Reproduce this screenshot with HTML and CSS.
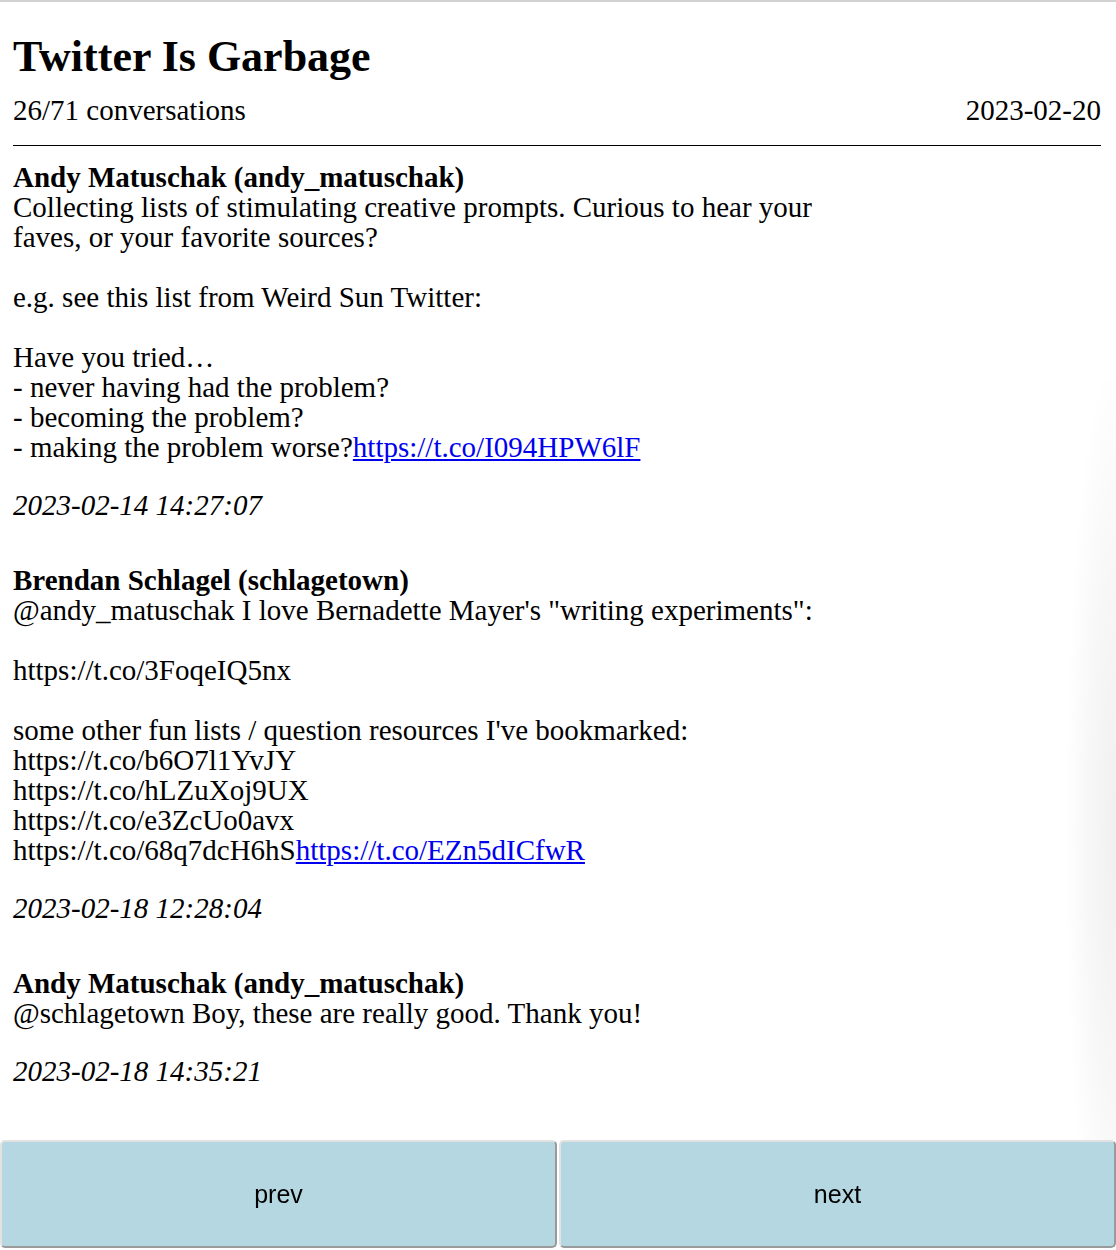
FILE: index.html
```html
<!DOCTYPE html>
<html lang="en">
<head>
<meta charset="utf-8">
<title>Twitter Is Garbage</title>
<link rel="stylesheet" href="styles.css">
</head>
<body>
<div class="page">
  <header class="masthead">
    <h1 class="title">Twitter Is Garbage</h1>
    <div class="meta">
      <span>26/71 conversations</span>
      <span>2023-02-20</span>
    </div>
  </header>
  <hr class="rule">
  <main class="thread">
    <article class="tweet">
      <div class="author">Andy Matuschak (andy_matuschak)</div>
      <div class="text">Collecting lists of stimulating creative prompts. Curious to hear your faves, or your favorite sources?

e.g. see this list from Weird Sun Twitter:

Have you tried…
- never having had the problem?
- becoming the problem?
- making the problem worse?<a href="#">https://t.co/I094HPW6lF</a></div>
      <div class="date">2023-02-14 14:27:07</div>
    </article>
    <article class="tweet">
      <div class="author">Brendan Schlagel (schlagetown)</div>
      <div class="text">@andy_matuschak I love Bernadette Mayer's "writing experiments":

https://t.co/3FoqeIQ5nx

some other fun lists / question resources I've bookmarked:
https://t.co/b6O7l1YvJY
https://t.co/hLZuXoj9UX
https://t.co/e3ZcUo0avx
https://t.co/68q7dcH6hS<a href="#">https://t.co/EZn5dICfwR</a></div>
      <div class="date">2023-02-18 12:28:04</div>
    </article>
    <article class="tweet">
      <div class="author">Andy Matuschak (andy_matuschak)</div>
      <div class="text">@schlagetown Boy, these are really good. Thank you!</div>
      <div class="date">2023-02-18 14:35:21</div>
    </article>
  </main>
</div>
<div class="edge-shadow"></div>
<nav class="pager">
  <button class="pager-btn" type="button">prev</button>
  <button class="pager-btn" type="button">next</button>
</nav>
</body>
</html>
```

FILE: styles.css
```css
html, body {
  margin: 0;
  padding: 0;
  background: #fff;
}

body {
  border-top: 2px solid #d2d2d2;
  font-family: "Liberation Serif", "Times New Roman", serif;
  font-size: 29px;
  line-height: 30px;
  color: #000;
}

.page {
  padding: 30px 15px 160px 13px;
}

.title {
  margin: 0;
  font-size: 44px;
  line-height: 50px;
  font-weight: bold;
}

.meta {
  margin-top: 13px;
  display: flex;
  justify-content: space-between;
}

.rule {
  margin: 20px 0 16px 0;
  border: 0;
  border-top: 1px solid #000;
  height: 0;
}

.thread {
  display: flex;
  flex-direction: column;
  gap: 45px;
}

.tweet {
  max-width: 840px;
}

.author {
  font-weight: bold;
}

.text {
  white-space: pre-wrap;
}

.text a {
  color: #0000ee;
  text-decoration: underline;
}

.date {
  margin-top: 28px;
  font-style: italic;
}

.edge-shadow {
  position: fixed;
  right: 0;
  top: 380px;
  width: 48px;
  height: 760px;
  background: radial-gradient(ellipse at 100% 60%, rgba(0,0,0,0.06) 0%, rgba(0,0,0,0.03) 40%, rgba(0,0,0,0) 75%);
  pointer-events: none;
}

.pager {
  position: fixed;
  left: 0;
  right: 0;
  bottom: 2px;
  display: flex;
  gap: 2px;
}

.pager-btn {
  flex: 1;
  height: 108px;
  margin: 0;
  background: #b5d7e2;
  border: 2px solid;
  border-color: #e2e2e2 #9a9a9a #9a9a9a #e2e2e2;
  border-radius: 5px;
  font-family: "Liberation Sans", Arial, sans-serif;
  font-size: 25px;
  color: #000;
}
```
